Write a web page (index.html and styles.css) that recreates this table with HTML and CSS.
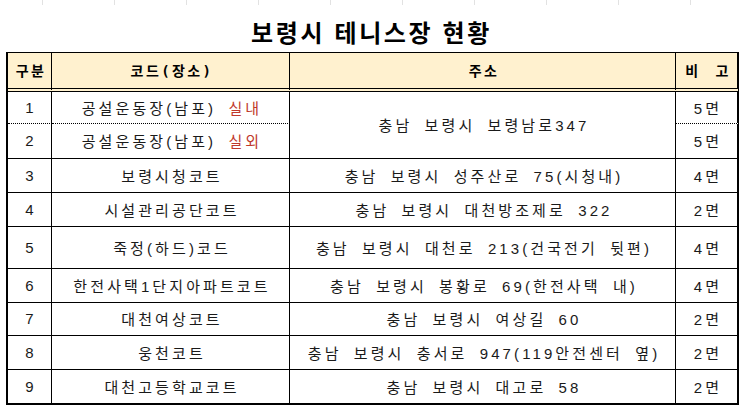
FILE: index.html
```html
<!DOCTYPE html>
<html lang="ko">
<head>
<meta charset="utf-8">
<title>보령시 테니스장 현황</title>
<link rel="stylesheet" href="styles.css">
</head>
<body>
<div class="title">보령시 테니스장 현황</div>
<div class="sheet">
  <div class="c hd">구분</div>
  <div class="c hd">코드(장소)</div>
  <div class="c hd">주소</div>
  <div class="c hd last">비 고</div>

  <div class="c dot">1</div>
  <div class="c dot"><span>공설운동장(남포) <span class="red">실내</span></span></div>
  <div class="c span2">충남 보령시 보령남로347</div>
  <div class="c dot last">5면</div>

  <div class="c">2</div>
  <div class="c"><span>공설운동장(남포) <span class="red">실외</span></span></div>
  <div class="c last">5면</div>

  <div class="c">3</div>
  <div class="c">보령시청코트</div>
  <div class="c">충남 보령시 성주산로 75(시청내)</div>
  <div class="c last">4면</div>

  <div class="c">4</div>
  <div class="c">시설관리공단코트</div>
  <div class="c">충남 보령시 대천방조제로 322</div>
  <div class="c last">2면</div>

  <div class="c">5</div>
  <div class="c">죽정(하드)코드</div>
  <div class="c">충남 보령시 대천로 213(건국전기 뒷편)</div>
  <div class="c last">4면</div>

  <div class="c">6</div>
  <div class="c">한전사택1단지아파트코트</div>
  <div class="c">충남 보령시 봉황로 69(한전사택 내)</div>
  <div class="c last">4면</div>

  <div class="c">7</div>
  <div class="c">대천여상코트</div>
  <div class="c">충남 보령시 여상길 60</div>
  <div class="c last">2면</div>

  <div class="c">8</div>
  <div class="c">웅천코트</div>
  <div class="c">충남 보령시 충서로 947(119안전센터 옆)</div>
  <div class="c last">2면</div>

  <div class="c bot">9</div>
  <div class="c bot">대천고등학교코트</div>
  <div class="c bot">충남 보령시 대고로 58</div>
  <div class="c bot last">2면</div>
</div>
</body>
</html>
```
FILE: styles.css
```css
html, body {
  margin: 0;
  padding: 0;
}
body {
  width: 741px;
  height: 406px;
  overflow: hidden;
  background-color: #fff;
  background-image: repeating-linear-gradient(to right, transparent 0 42px, #e2e2e2 42px 43px, transparent 43px 72px);
  background-size: 100% 5px;
  background-repeat: no-repeat;
  font-family: "Liberation Sans", "Noto Sans CJK KR", sans-serif;
  color: #1a1a1a;
}
.title {
  height: 52px;
  box-sizing: border-box;
  padding: 10px 0 0 2px;
  display: flex;
  align-items: center;
  justify-content: center;
  font-family: "Noto Sans CJK KR", "Noto Sans", sans-serif;
  font-size: 24px;
  font-weight: 700;
  letter-spacing: 2.6px;
  color: #000;
}
.sheet {
  margin-left: 6px;
  width: 731px;
  display: grid;
  grid-template-columns: 44px 238px 386px 63px;
  grid-template-rows: 39px 32px 35px 34px 34px 42px 34px 33px 34px 35px;
  border-top: 1px solid #000;
  border-left: 2px solid #000;
  box-sizing: content-box;
}
.c {
  box-sizing: border-box;
  border-right: 1px solid #000;
  border-bottom: 1px solid #000;
  display: flex;
  align-items: center;
  justify-content: center;
  font-size: 15px;
  letter-spacing: 3.1px;
  word-spacing: 5px;
  padding-left: 3px;
  padding-bottom: 1px;
  white-space: nowrap;
}
.hd {
  background: #fff1cf;
  font-family: "DejaVu Sans Mono", "Noto Sans CJK KR", monospace;
  font-size: 14px;
  font-weight: 700;
  letter-spacing: 2.4px;
  word-spacing: 4px;
  border-bottom: 4px double #000;
  color: #000;
}
.dot {
  border-bottom: 1px dotted #000;
}
.span2 {
  grid-row: span 2;
}
.last {
  border-right: 2px solid #000;
}
.bot {
  border-bottom: 2px solid #000;
}
.red {
  color: #c0392b;
}
```
